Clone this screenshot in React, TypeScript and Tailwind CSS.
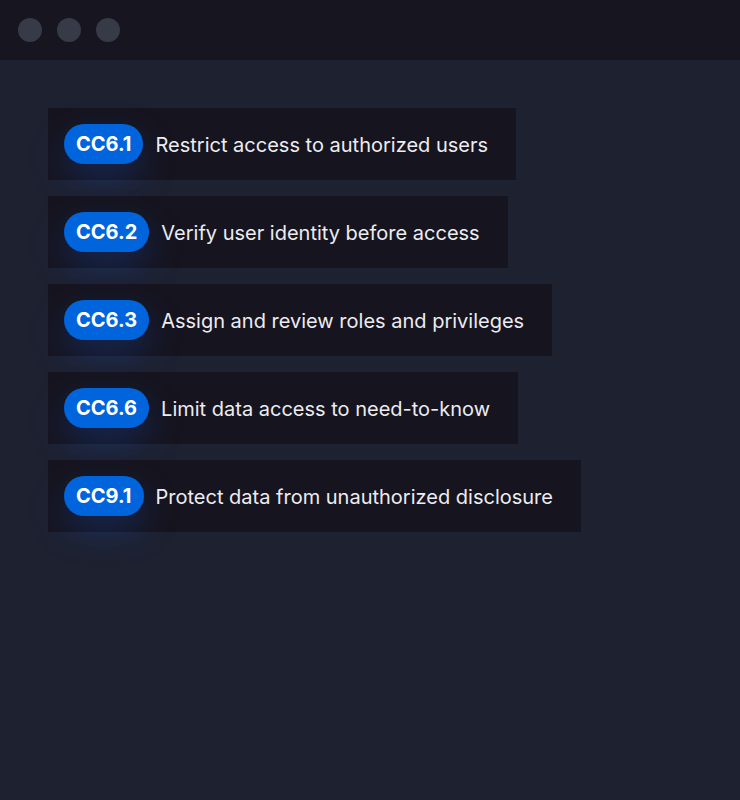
const items = [
  { code: 'CC6.1', text: 'Restrict access to authorized users' },
  { code: 'CC6.2', text: 'Verify user identity before access' },
  { code: 'CC6.3', text: 'Assign and review roles and privileges' },
  { code: 'CC6.6', text: 'Limit data access to need-to-know' },
  { code: 'CC9.1', text: 'Protect data from unauthorized disclosure' },
];

export default function App() {
  return (
    <div className="min-h-[800px] w-[740px] bg-[#1e2130] font-['Inter',sans-serif]">
      <div className="flex h-[60px] items-center gap-[15px] bg-[#17151f] px-[18px]">
        <span className="h-6 w-6 rounded-full bg-[#373b47]" />
        <span className="h-6 w-6 rounded-full bg-[#373b47]" />
        <span className="h-6 w-6 rounded-full bg-[#373b47]" />
      </div>
      <div className="flex flex-col items-start gap-4 px-12 pt-12">
        {items.map((item) => (
          <div key={item.code} className="flex h-[72px] items-center gap-3 bg-[#16141e] pl-4 pr-7">
            <span className="flex h-10 items-center rounded-full bg-[#0065dd] px-3 text-[20px] font-bold text-white shadow-[0_14px_36px_rgba(20,90,210,0.3)]">
              {item.code}
            </span>
            <span className="pt-[2px] text-[20px] text-[#ececf1]">{item.text}</span>
          </div>
        ))}
      </div>
    </div>
  );
}
